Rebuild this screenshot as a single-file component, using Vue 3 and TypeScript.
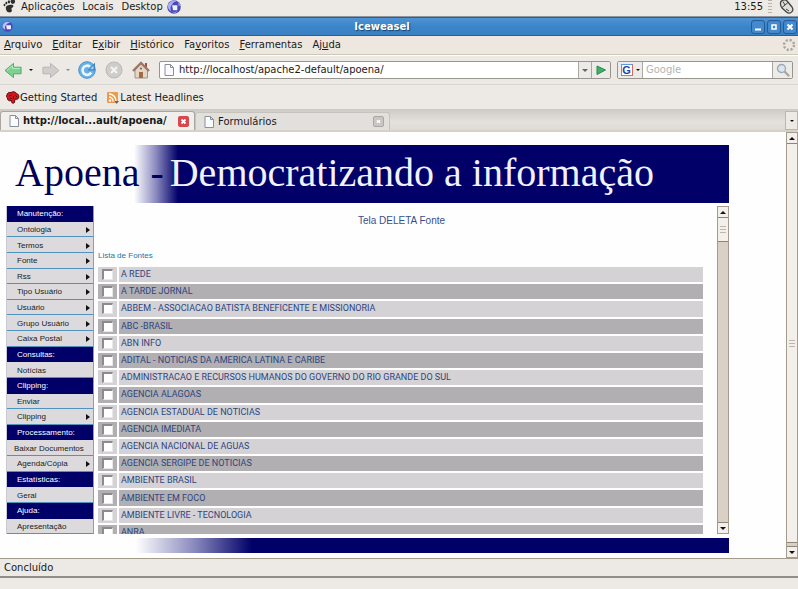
<script setup lang="ts">
import { ref } from 'vue'

interface MenuEntry {
  label: string
  heading?: boolean
  sub?: boolean
  wide?: boolean
}

const browserMenus: [string, string, string][] = [
  ['', 'A', 'rquivo'],
  ['', 'E', 'ditar'],
  ['E', 'x', 'ibir'],
  ['', 'H', 'istórico'],
  ['Fa', 'v', 'oritos'],
  ['', 'F', 'erramentas'],
  ['Aj', 'u', 'da'],
]

const sideMenu: MenuEntry[] = [
  { label: 'Manutenção:', heading: true },
  { label: 'Ontologia', sub: true },
  { label: 'Termos', sub: true },
  { label: 'Fonte', sub: true },
  { label: 'Rss', sub: true },
  { label: 'Tipo Usuário', sub: true },
  { label: 'Usuário', sub: true },
  { label: 'Grupo Usuário', sub: true },
  { label: 'Caixa Postal', sub: true },
  { label: 'Consultas:', heading: true },
  { label: 'Notícias' },
  { label: 'Clipping:', heading: true },
  { label: 'Enviar' },
  { label: 'Clipping', sub: true },
  { label: 'Processamento:', heading: true },
  { label: 'Baixar Documentos', wide: true },
  { label: 'Agenda/Cópia', sub: true },
  { label: 'Estatísticas:', heading: true },
  { label: 'Geral' },
  { label: 'Ajuda:', heading: true },
  { label: 'Apresentação' },
]

const sources: string[] = [
  'A REDE',
  'A TARDE JORNAL',
  'ABBEM - ASSOCIACAO BATISTA BENEFICENTE E MISSIONORIA',
  'ABC -BRASIL',
  'ABN INFO',
  'ADITAL - NOTICIAS DA AMERICA LATINA E CARIBE',
  'ADMINISTRACAO E RECURSOS HUMANOS DO GOVERNO DO RIO GRANDE DO SUL',
  'AGENCIA ALAGOAS',
  'AGENCIA ESTADUAL DE NOTICIAS',
  'AGENCIA IMEDIATA',
  'AGENCIA NACIONAL DE AGUAS',
  'AGENCIA SERGIPE DE NOTICIAS',
  'AMBIENTE BRASIL',
  'AMBIENTE EM FOCO',
  'AMBIENTE LIVRE - TECNOLOGIA',
  'ANRA',
]

const selected = ref<string[]>([])
const address = ref('http://localhost/apache2-default/apoena/')
const query = ref('')
</script>

<template>
  <div class="desktop">
    <header class="panel">
      <svg class="foot" viewBox="0 0 14 14" aria-hidden="true">
        <g fill="#2e3030">
          <ellipse cx="10.6" cy="1.2" rx="2.4" ry="2.6" />
          <ellipse cx="6.4" cy="1.4" rx="1.3" ry="1.7" />
          <ellipse cx="3.6" cy="2.8" rx="1.1" ry="1.5" />
          <ellipse cx="1.6" cy="4.8" rx="1" ry="1.3" />
          <path d="M3 8C3 5.200 7 4.300 9.600 4.700C12 5.100 11.600 7.200 9.600 8C8.400 8.600 9.400 9.600 9.600 10.600C9.800 13.600 5 13.600 4 11.400C3.300 10 3 9 3 8z" />
        </g>
      </svg>
      <nav class="panel-menus">
        <button type="button">Aplicações</button>
        <button type="button">Locais</button>
        <button type="button">Desktop</button>
      </nav>
      <svg class="globe" viewBox="0 0 16 16" aria-hidden="true">
        <circle cx="8" cy="7.500" r="7.200" fill="#4a48b8" />
        <path d="M1.500 5C4 1 8 0 11 1C8 2 6.500 3 6 5C4 6 4 9 5 12C2 10 1 8 1.500 5z" fill="#a9aff0" />
        <path d="M6 5.500H11.500V11H7z" fill="#eef0ff" />
        <path d="M12 2L15.500 5L13 7zM4 11.500L8 13L12 12L9 14.500z" fill="#8d95ea" />
      </svg>
      <span class="clock">13:55</span>
      <span class="grip"></span>
      <svg class="mouse" viewBox="0 0 15 15" aria-hidden="true">
        <path d="M1.500 4C1 0 6-1.500 8.500 1.500L13 7C15.500 11 11 15 7.500 12L3 8C2 7 1.500 5.500 1.500 4z" fill="#deded9" stroke="#444" stroke-width="1.300" />
        <path d="M3 7.500L9 2.500M6 5L4 1.500M7 9L10 11" stroke="#444" fill="none" />
      </svg>
    </header>

    <div class="titlebar">
      <svg class="title-icon" viewBox="0 0 16 16" aria-hidden="true">
        <circle cx="8" cy="8" r="7.500" fill="#4a48b8" />
        <path d="M1 6C3 1 8 0 12 2C8 3 7 4 6 6C4 7 4 10 5 13C2 11 0 9 1 6z" fill="#b9c0f5" />
        <path d="M6 6H13V12H7z" fill="#eef0ff" />
      </svg>
      <h1>Iceweasel</h1>
      <div class="window-buttons">
        <button type="button" aria-label="Minimizar">
          <svg viewBox="0 0 12 12"><path d="M3 8.500H9" stroke="#fff" stroke-width="2" /></svg>
        </button>
        <button type="button" aria-label="Maximizar">
          <svg viewBox="0 0 12 12"><rect x="4" y="4" width="4" height="4" fill="none" stroke="#fff" stroke-width="1.500" /></svg>
        </button>
        <button type="button" aria-label="Fechar">
          <svg viewBox="0 0 12 12"><path d="M3.500 3.500L8.500 8.500M8.500 3.500L3.500 8.500" stroke="#fff" stroke-width="2" /></svg>
        </button>
      </div>
    </div>

    <nav class="menubar">
      <button v-for="m in browserMenus" :key="m[1] + m[2]" type="button">{{ m[0] }}<u>{{ m[1] }}</u>{{ m[2] }}</button>
      <svg class="throbber" viewBox="0 0 14 14" aria-hidden="true">
        <circle cx="7" cy="7" r="5" fill="none" stroke="#a8a6a2" stroke-width="2.400" stroke-dasharray="2.200 1.727" />
      </svg>
    </nav>

    <div class="toolbar">
      <button type="button" class="tool" aria-label="Voltar">
        <svg class="arrow" viewBox="0 0 20 18">
          <path d="M1 9L10 1.500V5.500H18V12.500H10V16.500z" fill="#7fd192" stroke="#4ba763" stroke-linejoin="round" />
          <path d="M3 8.800L9 4V6.800H17" fill="none" stroke="#b9eec4" />
        </svg>
      </button>
      <button type="button" class="drop" aria-label="Histórico anterior"><i class="down small"></i></button>
      <button type="button" class="tool" aria-label="Avançar">
        <svg class="arrow" viewBox="0 0 20 18">
          <path d="M19 9L10 1.500V5.500H2V12.500H10V16.500z" fill="#cfcecc" stroke="#b4b2af" stroke-linejoin="round" />
        </svg>
      </button>
      <button type="button" class="drop" aria-label="Histórico seguinte"><i class="down small faded"></i></button>
      <button type="button" class="tool" aria-label="Recarregar">
        <svg class="round" viewBox="0 0 18 18">
          <circle cx="9" cy="9" r="8.300" fill="#69b1e4" stroke="#4b92cb" />
          <path d="M13.200 11.500A4.600 4.600 0 1 1 12 5.600" fill="none" stroke="#eaf6ff" stroke-width="2.600" />
          <path d="M17 1.500V9.500H9.500z" fill="#3e84c4" />
          <path d="M15.500 4.500V8.300H12z" fill="#a9d6f6" />
        </svg>
      </button>
      <button type="button" class="tool" aria-label="Parar">
        <svg class="round" viewBox="0 0 18 18">
          <circle cx="9" cy="9" r="8" fill="#cfcdca" stroke="#bbb8b4" />
          <path d="M6 6L12 12M12 6L6 12" stroke="#f4f3f1" stroke-width="2.200" />
        </svg>
      </button>
      <button type="button" class="tool" aria-label="Página inicial">
        <svg class="round" viewBox="0 0 18 18">
          <path d="M3 9V17H15.500V9L9 3z" fill="#e4d6c4" stroke="#a49482" />
          <path d="M13 2H15V6H13z" fill="#a45040" />
          <path d="M1 10L9 2L17 10" fill="none" stroke="#9c7867" stroke-width="2.400" />
          <path d="M7 11H11V17H7z" fill="#a26a48" />
          <circle cx="9" cy="7.500" r="1" fill="#715848" />
        </svg>
      </button>

      <div class="address">
        <label class="field">
          <svg class="page" viewBox="0 0 12 12" aria-hidden="true"><path d="M2 .5H7.500L10.500 3.500V11.500H2zM7.500 .5V3.500H10.500" fill="#fafbfd" stroke="#8a8f99" /></svg>
          <input v-model="address" type="text" aria-label="Endereço" />
        </label>
        <button type="button" class="attached" aria-label="Endereços anteriores"><i class="down grey"></i></button>
        <button type="button" class="attached go" aria-label="Ir">
          <svg viewBox="0 0 10 10"><path d="M1 1L9.500 5L1 9.500z" fill="#42b069" stroke="#2c8650" /></svg>
        </button>
      </div>

      <div class="search">
        <button type="button" class="attached engine" aria-label="Escolher buscador">
          <span class="g-logo">G</span><i class="down small"></i>
        </button>
        <input v-model="query" type="text" placeholder="Google" aria-label="Buscar" />
        <button type="button" class="attached lens" aria-label="Buscar agora">
          <svg viewBox="0 0 14 14">
            <path d="M8 8L12.500 12.500" stroke="#aaa69f" stroke-width="2.400" stroke-linecap="round" />
            <circle cx="5.500" cy="5.500" r="4" fill="#d7e6f3" stroke="#9fa6ad" stroke-width="1.300" />
          </svg>
        </button>
      </div>
    </div>

    <nav class="bookmarks">
      <a href="#">
        <svg viewBox="0 0 14 14" aria-hidden="true">
          <path d="M1 4C1 2 3 1 5 1.500C7 0 10 1 10.500 2.500C12.500 3 13.500 5 12.500 7C12 8.500 10 8.500 9 8L8.500 11.500C7 13 5 12 5.500 9.500C3 10.500 1 9 1.500 7C0 6 0 5 1 4z" fill="#d3161b" stroke="#521014" />
          <path d="M3.500 5L5.500 4M7.500 5V8M9.500 4.500L11 6M4 7.500H6" stroke="#521014" />
        </svg>Getting Started</a>
      <a href="#">
        <svg viewBox="0 0 14 14" aria-hidden="true">
          <rect x="1" y="1" width="11" height="11" rx="1" fill="#ee9a4c" />
          <path d="M3 6A4 4 0 0 1 7 10.500M3 3A7 7 0 0 1 10 10.500" fill="none" stroke="#fff" stroke-width="1.400" />
          <circle cx="4" cy="9.500" r="1.200" fill="#fff" />
          <path d="M8.500 10H13L10.700 13z" fill="#666" />
        </svg>Latest Headlines</a>
    </nav>

    <div class="tabs" role="tablist">
      <div class="tab active">
        <button type="button" role="tab" aria-selected="true" class="tab-label">
          <svg class="page" viewBox="0 0 12 12" aria-hidden="true"><path d="M2 .5H7.500L10.500 3.500V11.500H2zM7.500 .5V3.500H10.500" fill="#fafbfd" stroke="#8a8f99" /></svg>
          http://local...ault/apoena/
        </button>
        <button type="button" class="close" aria-label="Fechar aba">
          <svg viewBox="0 0 11 11"><path d="M3.500 3.500L7.500 7.500M7.500 3.500L3.500 7.500" stroke="#fff" stroke-width="1.800" /></svg>
        </button>
      </div>
      <div class="tab">
        <button type="button" role="tab" aria-selected="false" class="tab-label">
          <svg class="page" viewBox="0 0 12 12" aria-hidden="true"><path d="M2 .5H7.500L10.500 3.500V11.500H2zM7.500 .5V3.500H10.500" fill="#fafbfd" stroke="#8a8f99" /></svg>
          Formulários
        </button>
        <button type="button" class="close off" aria-label="Fechar aba">
          <svg viewBox="0 0 11 11"><path d="M3.500 4L7.500 7M7.500 4L3.500 7" stroke="#fff" stroke-width="1.500" /></svg>
        </button>
      </div>
      <button type="button" class="all-tabs" aria-label="Listar abas"><i class="down small"></i></button>
    </div>

    <div class="viewport">
      <main class="site">
        <h2 class="banner"><span class="dark">Apoena</span><span class="dark dash">-</span><span>Democratizando a informação</span></h2>

        <div class="columns">
          <nav class="side">
            <template v-for="item in sideMenu" :key="item.label">
              <strong v-if="item.heading" class="heading">{{ item.label }}</strong>
              <a v-else href="#" :class="{ wide: item.wide }">{{ item.label }}<i v-if="item.sub" class="right"></i></a>
            </template>
          </nav>

          <section class="frame">
            <form class="listing" @submit.prevent>
              <h3>Tela DELETA Fonte</h3>
              <table>
                <caption>Lista de Fontes</caption>
                <tbody>
                  <tr v-for="(name, i) in sources" :key="name">
                    <td class="pick"><input :id="'fonte-' + i" v-model="selected" type="checkbox" :value="name" /></td>
                    <td><label :for="'fonte-' + i">{{ name }}</label></td>
                  </tr>
                </tbody>
              </table>
            </form>
            <div class="scroll">
              <span class="step"><i class="up"></i></span>
              <span class="thumb short"><i class="ridges"></i></span>
              <span class="step last"><i class="down"></i></span>
            </div>
          </section>
        </div>

        <div class="foot-band"></div>
      </main>
      <div class="scroll outer">
        <span class="step"><i class="up"></i></span>
        <span class="thumb long"><i class="ridges"></i></span>
        <span class="step last"><i class="down"></i></span>
      </div>
    </div>

    <footer class="status">Concluído</footer>
    <div class="taskbar"></div>
  </div>
</template>

<style>
body {
  margin: 0;
}
</style>

<style scoped>
* {
  box-sizing: border-box;
}

.desktop {
  display: flex;
  flex-direction: column;
  height: 100vh;
  overflow: hidden;
  background: #edeae6;
  color: #1a1a1a;
  font: 10px/14px "DejaVu Sans", sans-serif;
}

button,
input {
  margin: 0;
  padding: 0;
  border: 0;
  background: none;
  color: inherit;
  font: inherit;
}

svg {
  display: block;
  flex: none;
}

a {
  color: inherit;
  text-decoration: none;
}

/* small triangles */
.down,
.up,
.right {
  display: block;
  width: 0;
  height: 0;
  border: 3px solid transparent;
}

.down {
  border-width: 3px 3px 0;
  border-top-color: #111;
}

.down.small {
  border-width: 2px 2px 0;
}

.down.faded {
  border-top-color: #888;
}

.down.grey {
  border-top-color: #666;
}

.up {
  border-width: 0 3px 3px;
  border-bottom-color: #111;
}

.right {
  border-width: 3px 0 3px 4px;
  border-left-color: #111;
}

/* desktop panel */
.panel {
  display: flex;
  align-items: flex-start;
  height: 17px;
  padding-left: 3px;
  border-bottom: 1px solid #8d959e;
}

.foot {
  width: 13px;
  height: 14px;
}

.panel-menus {
  display: flex;
  gap: 8px;
  padding: 0 3px 0 5px;
}

.panel-menus button {
  height: 13px;
}

.globe {
  width: 16px;
  height: 15px;
}

.clock {
  margin-left: auto;
}

.grip {
  width: 4px;
  height: 15px;
  margin: 0 7px 0 5px;
  background: repeating-linear-gradient(#b9b3aa 0 1px, transparent 1px 3px);
}

.mouse {
  width: 15px;
  height: 15px;
  margin-right: 4px;
}

/* window title */
.titlebar {
  display: flex;
  align-items: center;
  height: 19px;
  padding: 0 1px 0 2px;
  border-top: 1px solid #2c5d93;
  border-bottom: 1px solid #2b5e96;
  background: linear-gradient(#4f93d4, #3b85ca 50%, #3a7fc0);
}

.title-icon {
  width: 11px;
  height: 11px;
}

h1 {
  flex: 1;
  margin: 0;
  color: #fff;
  font-size: 10px;
  line-height: 16px;
  text-align: center;
  text-shadow: 1px 1px 1px #1c3f68;
}

.window-buttons {
  display: flex;
  gap: 2px;
}

.window-buttons button {
  width: 14px;
  height: 14px;
  border: 1px solid #265a92;
  border-radius: 3px;
  background: #4289ce;
}

/* browser menu */
.menubar {
  display: flex;
  align-items: center;
  gap: 10px;
  height: 19px;
  padding: 0 2px 0 4px;
  border-bottom: 1px solid #cfc8b8;
  background: linear-gradient(#efe6df, #ece8e0);
}

.throbber {
  width: 14px;
  height: 14px;
  margin-left: auto;
}

/* navigation */
.toolbar {
  display: flex;
  align-items: center;
  height: 30px;
  padding: 0 5px 0 4px;
  border-top: 1px solid #fff;
  border-bottom: 1px solid #d8d5d0;
}

.tool {
  margin-right: 9px;
}

.arrow {
  width: 19px;
  height: 17px;
}

.round {
  width: 18px;
  height: 18px;
}

.drop {
  width: 8px;
  margin: 0 4px 0 -3px;
}

.address,
.search {
  display: flex;
  height: 18px;
  border: 1px solid #98948e;
  border-radius: 2px;
  background: #fff;
}

.address {
  flex: 1;
  margin-right: 6px;
}

.field {
  display: flex;
  flex: 1;
  align-items: center;
  gap: 4px;
  padding-left: 3px;
}

.field input {
  flex: 1;
  min-width: 0;
}

.page {
  width: 12px;
  height: 12px;
}

.attached {
  display: flex;
  align-items: center;
  justify-content: center;
  width: 13px;
  border-left: 1px solid #aaa6a0;
  background: #edebe8;
}

.go {
  width: 19px;
}

.go svg {
  width: 10px;
  height: 10px;
}

.search {
  width: 176px;
}

.search input {
  flex: 1;
  min-width: 0;
  padding-left: 3px;
}

.search input::placeholder {
  color: #b4b4b4;
  opacity: 1;
}

.engine {
  gap: 3px;
  width: 25px;
  border-right: 1px solid #aaa6a0;
  border-left: 0;
}

.g-logo {
  width: 12px;
  height: 12px;
  border: 1px solid;
  border-color: #5a9be0 #e0675c #5bb26b #5a9be0;
  background: #fff;
  color: #1c45b0;
  font: bold 11px/10px "Liberation Sans", sans-serif;
  text-align: center;
}

.lens {
  width: 20px;
}

.lens svg {
  width: 14px;
  height: 14px;
}

/* bookmarks */
.bookmarks {
  display: flex;
  align-items: center;
  gap: 9px;
  height: 24px;
  padding: 2px 0 0 6px;
}

.bookmarks a {
  display: flex;
  align-items: center;
}

.bookmarks svg {
  width: 14px;
  height: 14px;
}

/* tabs */
.tabs {
  display: flex;
  align-items: flex-end;
  height: 23px;
  border-bottom: 2px solid #d6d0c6;
  background: linear-gradient(#cdcac6, #e4e1dd 60%, #dedbd6);
}

.tab {
  display: flex;
  align-items: center;
  justify-content: space-between;
  width: 195px;
  height: 18px;
  padding: 0 5px 0 7px;
  border: 1px solid #c6c2bc;
  border-bottom: 0;
  border-radius: 3px 3px 0 0;
  background: #e2e0dd;
}

.tab.active {
  height: 19px;
  border-color: #aaa69f;
  background: #f1efec;
  font-weight: bold;
}

.tab-label {
  display: flex;
  align-items: center;
  gap: 3px;
}

.close {
  width: 11px;
  height: 11px;
  border-radius: 2px;
  background: #d7474d;
}

.close.off {
  border: 1px solid #a9a7a4;
  background: #c9c7c4;
}

.all-tabs {
  display: flex;
  align-items: center;
  justify-content: center;
  width: 13px;
  height: 19px;
  margin-left: auto;
  border: 1px solid #bbb7b0;
  background: #edeae6;
}

/* page */
.viewport {
  display: flex;
  flex: 1;
  min-height: 0;
  background: #fefefe;
}

.site {
  display: flex;
  flex: 1;
  flex-direction: column;
  min-width: 0;
  padding: 13px 57px 5px 6px;
}

.banner {
  display: flex;
  align-items: flex-start;
  gap: 11px;
  height: 58px;
  margin: 0 0 3px;
  padding-left: 9px;
  background: linear-gradient(90deg, #fefefe 128px, #8b8abf 150px, #000068 172px);
  color: #f2f2ff;
  font: 40px/56px "Liberation Serif", serif;
  white-space: nowrap;
}

.dark {
  color: #000058;
}

.dash {
  margin-right: -5px;
}

.columns {
  display: flex;
  flex: 1;
  gap: 4px;
  min-height: 0;
}

.side {
  display: flex;
  flex: none;
  flex-direction: column;
  width: 88px;
  border-right: 1px solid #6fa6cf;
  border-left: 1px solid #c9c9d2;
  background: #dcdadc;
  font: 8px/14px "Liberation Sans", sans-serif;
}

.side > * {
  display: flex;
  flex: 1;
  align-items: center;
  justify-content: space-between;
  min-height: 0;
  padding: 2px 3px 0 10px;
  border-bottom: 1px solid #4f93be;
}

.side .heading {
  border-bottom-color: #000068;
  background: #000068;
  color: #fff;
  font-weight: normal;
}

.side .wide {
  padding-left: 7px;
}

.frame {
  display: flex;
  flex: 1;
  min-width: 0;
}

.listing {
  flex: 1;
  min-width: 0;
  overflow: hidden;
  padding-right: 12px;
}

h3 {
  margin: 0;
  padding: 8px 0 23px;
  color: #384f88;
  font: 10px/14px "Liberation Sans", sans-serif;
  text-align: center;
}

table {
  width: calc(100% + 2px);
  height: 277px;
  margin-left: -2px;
  border-spacing: 2px;
}

caption {
  padding: 0 0 5px 2px;
  color: #1876a8;
  font: 8px/9px "Liberation Sans", sans-serif;
  text-align: left;
}

td {
  padding: 0 2px;
  background: #b1afb1;
  color: #2d4580;
  font: 9px/13px Roboto, sans-serif;
}

tr:nth-child(odd) td {
  background: #d4d2d5;
}

.pick {
  width: 19px;
  padding: 0 4px;
}

.pick input {
  display: block;
  width: 11px;
  height: 11px;
  appearance: none;
  border: 1px solid #e8e8e8;
  border-top: 2px solid #8c8a8c;
  border-left: 2px solid #8c8a8c;
  background: #fff;
}

.pick input:checked {
  background: #2d4580;
}

td label {
  display: block;
}

/* scrollbars */
.scroll {
  display: flex;
  flex: none;
  flex-direction: column;
  width: 12px;
  border: 1px solid #a59b8c;
  background: #dbd0c5;
}

.step,
.thumb {
  display: flex;
  align-items: center;
  justify-content: center;
  background: #f3f0ec;
}

.step {
  height: 11px;
  border-bottom: 1px solid #8e8578;
}

.step.last {
  margin-top: auto;
  border-top: 1px solid #8e8578;
  border-bottom: 0;
}

.thumb {
  border-bottom: 1px solid #8e8578;
}

.short {
  height: 24px;
}

.long {
  flex: 1;
  margin-bottom: 3px;
}

.ridges {
  width: 6px;
  height: 7px;
  background: repeating-linear-gradient(#bdb6ab 0 1px, transparent 1px 3px);
}

.foot-band {
  height: 15px;
  margin-top: 4px;
  background: linear-gradient(90deg, #fefefe 130px, #8b8abf 188px, #000068 246px);
}

/* bottom of the window */
.status {
  height: 20px;
  padding: 2px 4px;
  border-top: 1px solid #a59b8c;
  border-bottom: 2px solid #918e88;
}

.taskbar {
  height: 11px;
}
</style>
